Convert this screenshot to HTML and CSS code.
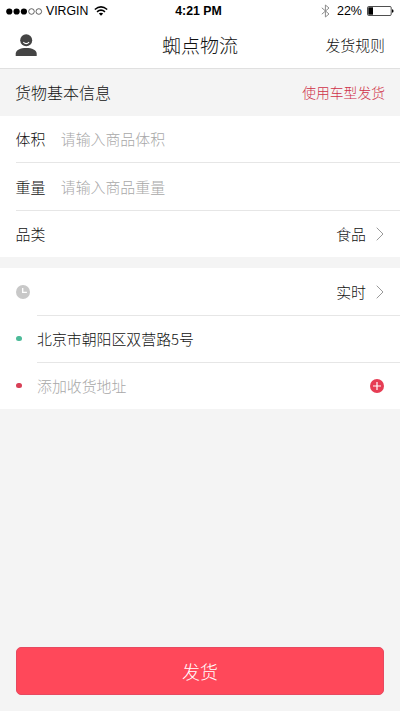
FILE: index.html
```html
<!DOCTYPE html>
<html lang="zh-CN">
<head>
<meta charset="utf-8">
<meta name="viewport" content="width=device-width, initial-scale=1">
<title>蜘点物流</title>
<link rel="stylesheet" href="styles.css">
</head>
<body>
<div class="app">
  <div class="status">
    <div class="status-left">
      <svg class="signal" width="37" height="7" viewBox="0 0 37 7">
        <g fill="#000"><circle cx="3.3" cy="3.5" r="3.1"/><circle cx="10.6" cy="3.5" r="3.1"/><circle cx="17.9" cy="3.5" r="3.1"/></g>
        <g fill="none" stroke="#222" stroke-width=".7"><circle cx="25.5" cy="3.5" r="2.8"/><circle cx="32.8" cy="3.5" r="2.8"/></g>
      </svg>
      <span class="carrier">VIRGIN</span>
      <svg class="wifi" width="14" height="10" viewBox="0 0 14 10">
        <g fill="none" stroke="#000" stroke-width="1.5"><path d="M.8 3.5Q7-1.7 13.2 3.5"/><path d="M3 5.8Q7 2.5 11 5.8"/></g>
        <path d="M4.8 7.5Q7 5.8 9.2 7.5L7 9.8Z"/>
      </svg>
    </div>
    <span class="time">4:21 PM</span>
    <div class="status-right">
      <svg class="bluetooth" width="9" height="14" viewBox="0 0 9 14" fill="none" stroke="#8c8c8c" stroke-width="1"><path d="M.8 3.8 8 10 4.4 13V1L8 4 .8 10.2"/></svg>
      <span class="percent">22%</span>
      <svg class="battery" width="27" height="10" viewBox="0 0 27 10"><rect x=".5" y=".5" width="23.7" height="9" rx="1.2" fill="none" stroke="#222" stroke-width=".8"/><rect x="1.3" y="1.3" width="4.7" height="7.4"/><path d="M25 3.2q1.6.3 1.6 1.8T25 6.8Z"/></svg>
    </div>
  </div>
  <header class="nav">
    <svg class="user" width="22" height="23" viewBox="0 0 22 23"><g fill="#444"><circle cx="11.2" cy="6.3" r="6"/><path d="M.7 22v-2.300C.7 16 5.500 14 11.200 14S21.700 16 21.700 19.700V22Z"/></g><path d="M8.300 8.200Q11.200 10.900 14.100 8.200" fill="none" stroke="#fff" stroke-width="1.100"/></svg>
    <h1 class="title">蜘点物流</h1>
    <a class="rules">发货规则</a>
  </header>
  <div class="section-head"><h2 class="section-title">货物基本信息</h2><a class="switch">使用车型发货</a></div>
  <section class="group cargo">
    <div class="row"><span class="label">体积</span><span class="hint">请输入商品体积</span></div>
    <div class="row line"><span class="label">重量</span><span class="hint">请输入商品重量</span></div>
    <div class="row line"><span class="label">品类</span><span class="value">食品</span><svg class="chevron" width="8" height="14" viewBox="0 0 8 14"><path d="M.7.7 7 7 .7 13.3"/></svg></div>
  </section>
  <section class="group route">
    <div class="row"><span class="lead"><svg width="14" height="14" viewBox="0 0 14 14"><circle cx="7" cy="7" r="7" fill="#c8c8c8"/><path d="M6.7 3v4.4h4.2" fill="none" stroke="#fff" stroke-width="1.3"/></svg></span><div class="cell"><span class="value">实时</span><svg class="chevron" width="8" height="14" viewBox="0 0 8 14"><path d="M.7.7 7 7 .7 13.3"/></svg></div></div>
    <div class="row"><span class="lead"><i class="dot green"></i></span><div class="cell line"><span class="label">北京市朝阳区双营路5号</span></div></div>
    <div class="row"><span class="lead"><i class="dot red"></i></span><div class="cell line"><span class="hint">添加收货地址</span><svg class="add" width="14" height="14" viewBox="0 0 14 14"><circle cx="7" cy="7" r="7" fill="#e63d54"/><path d="M7 3v8M3 7h8" stroke="#fff" stroke-width="1.2"/></svg></div></div>
  </section>
  <footer class="footer"><button class="submit">发货</button></footer>
</div>
</body>
</html>
```
FILE: styles.css
```css
* { box-sizing: border-box; }
body {
  margin: 0;
  background: #f4f4f4;
  color: #111;
  font-family: "Noto Sans CJK SC", sans-serif;
  font-size: 14.9px;
  font-weight: 300;
}
svg { display: block; flex: none; }
h1, h2 { margin: 0; font-weight: inherit; }
.app { display: flex; flex-direction: column; height: 711px; }
.status {
  display: grid;
  grid-template-columns: 1fr auto 1fr;
  align-items: center;
  height: 22px;
  padding: 0 6px;
  background: #fff;
  color: #000;
  font: 400 12.5px/22px "Liberation Sans", Arial, sans-serif;
}
.status-left, .status-right { display: flex; align-items: center; }
.status-right { justify-content: flex-end; }
.carrier { margin-left: 3px; font-size: 12.3px; }
.wifi { margin-left: 6px; }
.time { padding-right: 3px; font-size: 12.3px; font-weight: 700; }
.bluetooth { margin-right: 7px; }
.percent { margin-right: 5px; }
.nav {
  display: grid;
  grid-template-columns: 1fr auto 1fr;
  align-items: center;
  height: 47px;
  padding: 0 15px;
  background: #fff;
  border-bottom: 1px solid #e0e0e0;
}
.title { padding-bottom: 1px; font-size: 19px; line-height: 44px; }
.rules { justify-self: end; padding-bottom: 2px; }
.section-head {
  display: flex;
  align-items: center;
  justify-content: space-between;
  height: 47px;
  padding: 0 15px 2px;
}
.section-title { font-size: 16px; }
.switch { color: #cf3048; font-size: 13.8px; }
.group { padding-left: 16px; background: #fff; }
.row { display: flex; align-items: center; height: 47px; }
.cargo .row { padding-right: 16px; }
.cargo .row:first-child { height: 46px; }
.cargo .row:nth-child(2) { height: 48px; }
.line { border-top: 1px solid #e6e6e6; }
.label, .hint, .value { padding-bottom: 1px; }
.hint { color: #a8a8a8; }
.cargo .label { margin-left: -.5px; }
.label + .hint { margin-left: 15.5px; }
.value { margin-left: auto; }
.chevron { margin-left: 10px; fill: none; stroke: #999; stroke-width: 1; }
.route { margin-top: 11px; }
.lead { display: flex; width: 21px; }
.cell { display: flex; flex: 1; align-items: center; height: 47px; padding-right: 16px; }
.dot { width: 5.5px; height: 5.5px; border-radius: 50%; }
.green { background: #4dbb99; }
.red { background: #d84057; }
.add { margin-left: auto; }
.footer { margin-top: auto; padding: 0 16px 16px; }
.submit {
  display: block;
  width: 100%;
  height: 48px;
  padding: 0;
  border: 1px solid #e74960;
  border-radius: 5px;
  background: #ff485a;
  color: #fff;
  font: inherit;
  font-size: 18px;
}
```
